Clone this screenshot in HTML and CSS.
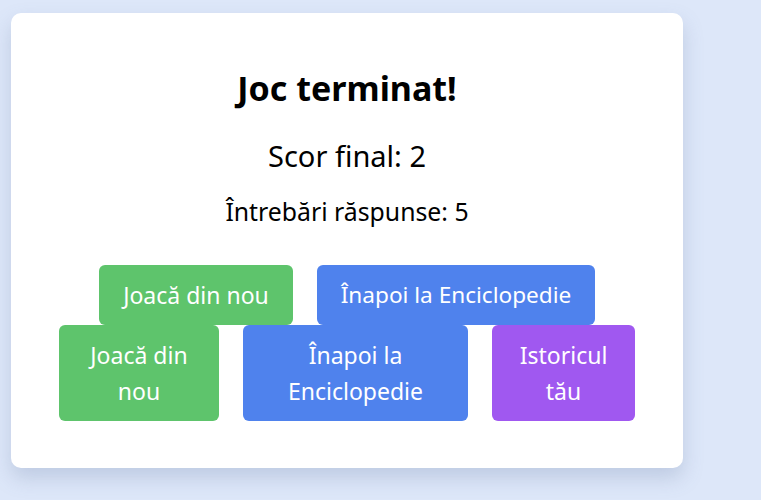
FILE: index.html
```html
<!DOCTYPE html>
<html lang="ro">
<head>
<meta charset="utf-8">
<link rel="stylesheet" href="styles.css">
</head>
<body>
<div class="card">
  <h1 class="title">Joc terminat!</h1>
  <p class="score">Scor final: 2</p>
  <p class="answered">Întrebări răspunse: 5</p>
  <div class="row first">
    <button class="btn green w-play1">Joacă din nou</button>
    <button class="btn blue w-back1">Înapoi la Enciclopedie</button>
  </div>
  <div class="row">
    <button class="btn green w-play">Joacă din nou</button>
    <button class="btn blue w-back">Înapoi la Enciclopedie</button>
    <button class="btn purple w-hist">Istoricul tău</button>
  </div>
</div>
</body>
</html>
```
FILE: styles.css
```css
html, body {
  margin: 0;
  padding: 0;
  height: 100%;
}
body {
  background: #dde7f9;
  font-family: "Noto Sans", "Open Sans", sans-serif;
  color: #000;
  padding: 13px 0 0 11px;
  box-sizing: border-box;
}
.card {
  width: 672px;
  height: 455px;
  box-sizing: border-box;
  background: #fff;
  border-radius: 10px;
  box-shadow: 0 10px 20px rgba(100, 120, 160, 0.25);
  padding-top: 51px;
  display: flex;
  flex-direction: column;
  align-items: center;
}
.title {
  margin: 0;
  font-size: 34px;
  font-weight: 700;
  line-height: 48px;
}
.score {
  margin: 26px 0 0;
  font-size: 29px;
  line-height: 36px;
}
.answered {
  margin: 22px 0 0;
  font-size: 24.8px;
  line-height: 30px;
}
.row {
  display: flex;
  justify-content: center;
  gap: 24px;
}
.row.first {
  margin-top: 39px;
}
.btn {
  border: none;
  border-radius: 6px;
  color: #fff;
  font-family: inherit;
  font-size: 23px;
  line-height: 36px;
  padding: 12px 0;
  text-align: center;
}
.green { background: #5ec46c; }
.blue { background: #4f82ed; }
.purple { background: #a058f0; }
.w-play1 { width: 194px; }
.w-back1 { width: 278px; font-size: 22.6px; }
.w-play { width: 160px; padding: 12px 24px; }
.w-back { width: 225px; padding: 12px 24px; }
.w-hist { width: 143px; padding: 12px 24px; }
```
